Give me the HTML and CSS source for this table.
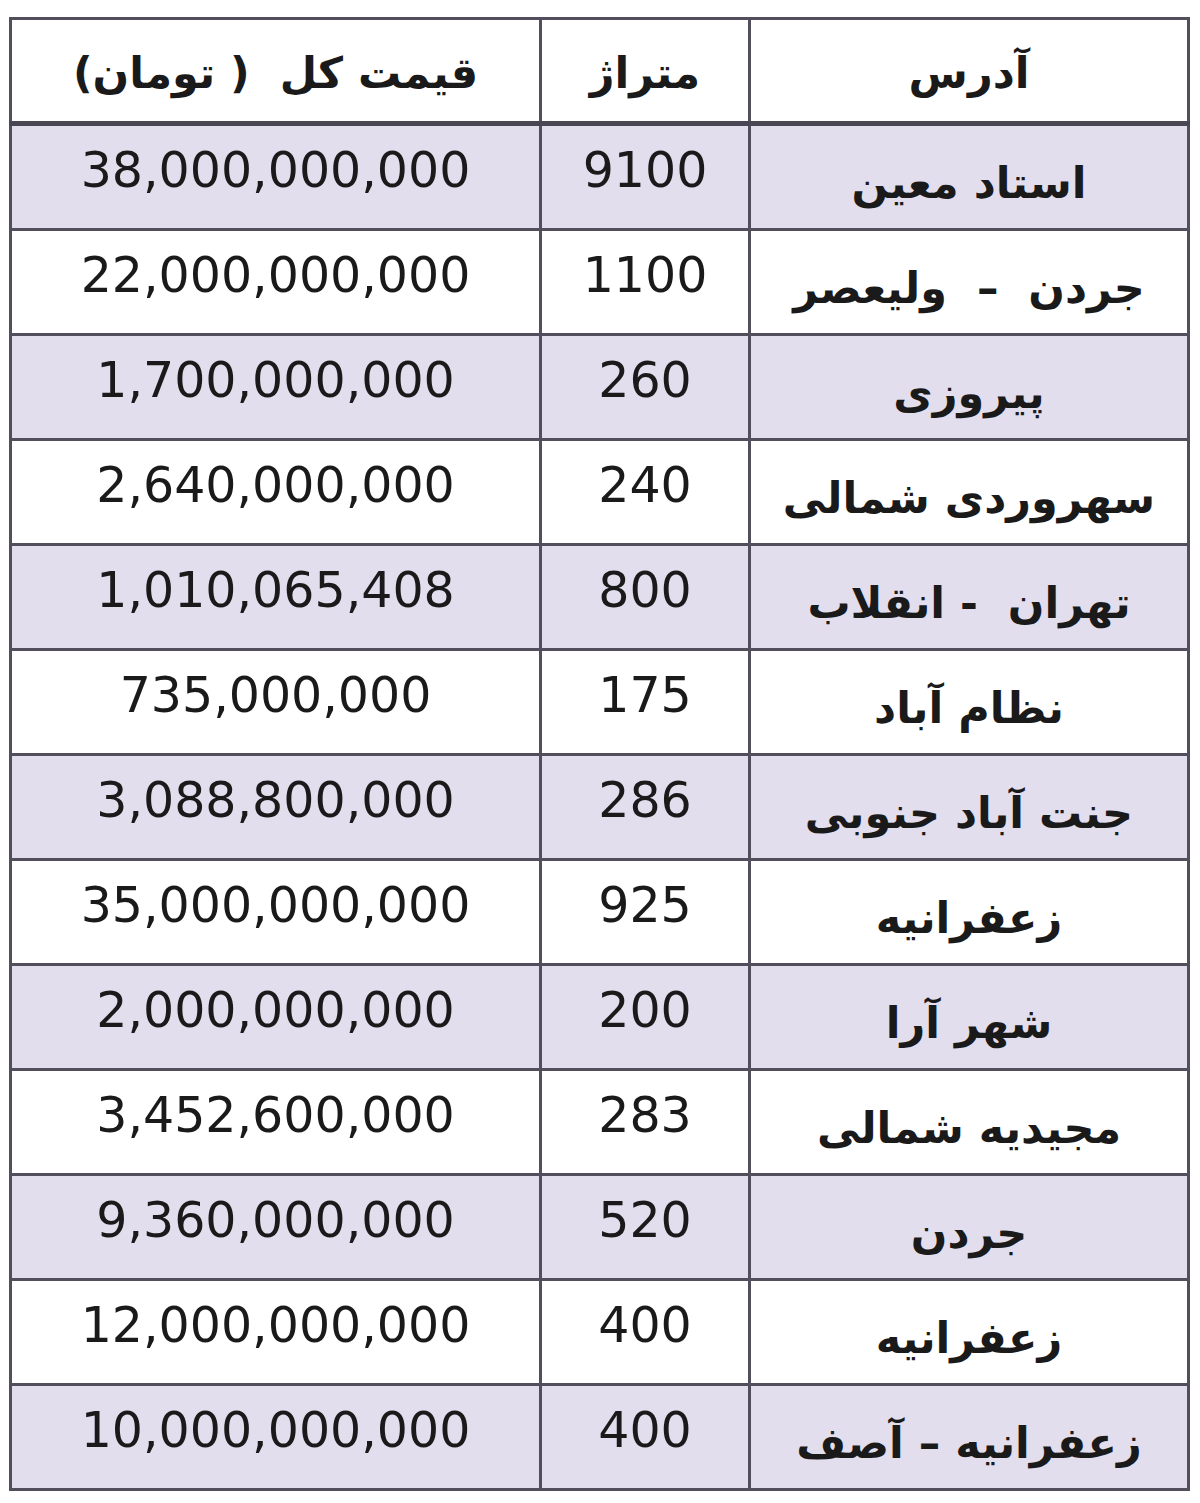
FILE: index.html
```html
<!DOCTYPE html>
<html lang="fa">
<head>
<meta charset="utf-8">
<title>قیمت آپارتمان</title>
<link rel="stylesheet" href="styles.css">
</head>
<body>
<table class="prices" dir="rtl">
  <thead>
    <tr>
      <th class="addr">آدرس</th>
      <th class="area">متراژ</th>
      <th class="price">قیمت کل&nbsp; ( تومان)</th>
    </tr>
  </thead>
  <tbody>
    <tr class="shade"><td class="addr">استاد معین</td><td class="area">9100</td><td class="price">38,000,000,000</td></tr>
    <tr><td class="addr">جردن &nbsp;– &nbsp;ولیعصر</td><td class="area">1100</td><td class="price">22,000,000,000</td></tr>
    <tr class="shade"><td class="addr">پیروزی</td><td class="area">260</td><td class="price">1,700,000,000</td></tr>
    <tr><td class="addr">سهروردی شمالی</td><td class="area">240</td><td class="price">2,640,000,000</td></tr>
    <tr class="shade"><td class="addr">تهران &nbsp;- انقلاب</td><td class="area">800</td><td class="price">1,010,065,408</td></tr>
    <tr><td class="addr">نظام آباد</td><td class="area">175</td><td class="price">735,000,000</td></tr>
    <tr class="shade"><td class="addr">جنت آباد جنوبی</td><td class="area">286</td><td class="price">3,088,800,000</td></tr>
    <tr><td class="addr">زعفرانیه</td><td class="area">925</td><td class="price">35,000,000,000</td></tr>
    <tr class="shade"><td class="addr">شهر آرا</td><td class="area">200</td><td class="price">2,000,000,000</td></tr>
    <tr><td class="addr">مجیدیه شمالی</td><td class="area">283</td><td class="price">3,452,600,000</td></tr>
    <tr class="shade"><td class="addr">جردن</td><td class="area">520</td><td class="price">9,360,000,000</td></tr>
    <tr><td class="addr">زعفرانیه</td><td class="area">400</td><td class="price">12,000,000,000</td></tr>
    <tr class="shade"><td class="addr">زعفرانیه – آصف</td><td class="area">400</td><td class="price">10,000,000,000</td></tr>
  </tbody>
</table>
</body>
</html>
```
FILE: styles.css
```css
html, body {
  margin: 0;
  padding: 0;
  background: #ffffff;
}

body {
  padding: 17px 0 0 9px;
}

.prices {
  border-collapse: collapse;
  width: 1181px;
  table-layout: fixed;
  color: #1a1a1a;
  border: 3px solid #524e5c;
}

.prices th,
.prices td {
  border: 3px solid #524e5c;
  text-align: center;
  vertical-align: middle;
  padding: 0;
  height: 102px;
}

.prices thead th {
  border-bottom: 5px solid #4a4654;
  font-family: "DejaVu Sans", sans-serif;
  font-weight: bold;
  font-size: 43px;
  padding-top: 4px;
  height: 97px;
  background: #ffffff;
}

.prices th.addr, .prices td.addr { width: 436px; }
.prices th.area, .prices td.area { width: 206px; }

.prices td.addr {
  font-family: "DejaVu Sans", sans-serif;
  font-weight: bold;
  font-size: 43px;
  padding-top: 12px;
  height: 90px;
}

.prices td.area,
.prices td.price {
  font-family: "DejaVu Sans", sans-serif;
  font-size: 49px;
  padding-bottom: 14px;
  height: 88px;
}

.prices tr.shade td {
  background: #e3deee;
}
```
